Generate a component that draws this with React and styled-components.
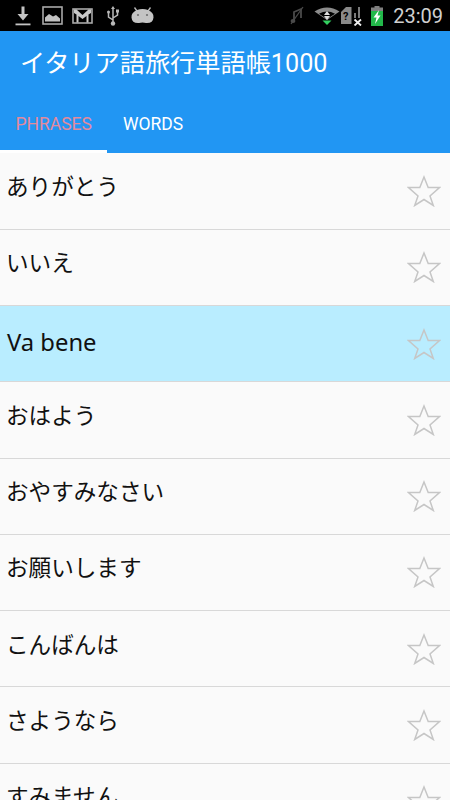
import React from 'react';
import styled, { createGlobalStyle } from 'styled-components';

const GlobalStyle = createGlobalStyle`
  html, body {
    margin: 0;
    padding: 0;
    height: 800px;
    overflow: hidden;
    background: #fafafa;
  }
`;

const Screen = styled.div`
  width: 450px;
  height: 800px;
  overflow: hidden;
  font-family: Roboto, "Noto Sans CJK JP", sans-serif;
`;

const StatusBar = styled.div`
  height: 31px;
  background: #000;
  display: flex;
  align-items: center;
  justify-content: space-between;
`;

const StatusGroup = styled.div`
  display: flex;
  align-items: center;
  padding: ${(p) => (p.$right ? '0 7px 0 0' : '0 0 0 15px')};
`;

const Glyph = styled.svg`
  display: block;
  flex: none;
  margin-left: ${(p) => p.$left || 0}px;
`;

const Clock = styled.span`
  font-size: 20px;
  color: #d0d0d0;
  margin-left: 10px;
`;

const AppBar = styled.header`
  height: 122px;
  background: #2196f3;
  display: flex;
  flex-direction: column;
`;

const Title = styled.h1`
  margin: 0;
  height: 60px;
  display: flex;
  align-items: center;
  padding-left: 20px;
  font-size: 25.2px;
  font-weight: 400;
  color: #fff;
`;

const Tabs = styled.nav`
  margin-top: auto;
  display: flex;
`;

const Tab = styled.div`
  height: 57px;
  box-sizing: border-box;
  display: flex;
  align-items: center;
  padding: 2px 15.5px 0;
  font-size: 17.5px;
  color: ${(p) => (p.$active ? '#e48a9c' : '#fff')};
  border-bottom: 3px solid ${(p) => (p.$active ? '#fff' : 'transparent')};
`;

const List = styled.main`
  padding-top: 0.5px;
`;

const Row = styled.div`
  height: 76.25px;
  box-sizing: border-box;
  display: flex;
  align-items: center;
  justify-content: space-between;
  padding: 0 9px 0 ${(p) => (p.$selected ? '7px' : '6px')};
  background: ${(p) => (p.$selected ? '#b9edff' : '#fafafa')};
  border-bottom: 1px solid #d8d8d8;
`;

const RowText = styled.span`
  font-family: "Noto Sans", "Noto Sans CJK JP", sans-serif;
  font-size: ${(p) => (p.$latin ? '23.8px' : '22.6px')};
  line-height: 30px;
  color: #111;
  padding-bottom: ${(p) => (p.$latin ? '4px' : '8px')};
`;

const Star = () => (
  <Glyph width="34" height="32" viewBox="0 0 34 32" fill="none" stroke="#c6c6c6" strokeWidth="1.5">
    <path d="M17 2 L21.2 12.5 L32.5 12.5 L23 21 L26.3 30.5 L17 24.5 L7.7 30.5 L11 21 L1.5 12.5 L12.8 12.5 Z" />
  </Glyph>
);

const words = [
  'ありがとう',
  'いいえ',
  'Va bene',
  'おはよう',
  'おやすみなさい',
  'お願いします',
  'こんばんは',
  'さようなら',
  'すみません',
];

const App = () => (
  <Screen>
    <GlobalStyle />
    <StatusBar>
      <StatusGroup>
        <Glyph width="16" height="20" viewBox="0 0 16 20" fill="#c4c4c4">
          <path d="M6.5 0.5 H9.5 V8 H13.5 L8 14.5 L2.5 8 H6.5 Z" />
          <rect x="0.5" y="17.5" width="15" height="1.8" />
        </Glyph>
        <Glyph $left={11} width="21" height="19" viewBox="0 0 21 19">
          <rect x="1" y="1" width="19" height="17" fill="none" stroke="#a8a8a8" strokeWidth="1.6" />
          <path d="M3 15.5 V11.5 L7 8 L11 10.5 L14 9 L18 12.5 V15.5 Z" fill="#c0c0c0" />
        </Glyph>
        <Glyph $left={9} width="21" height="16" viewBox="0 0 21 16">
          <rect x="1" y="1" width="19" height="14" fill="none" stroke="#a8a8a8" strokeWidth="1.6" />
          <path d="M2 1.5 H4.5 L10.5 7 L16.5 1.5 H19 V5 L16.5 6.5 V14.5 H14.5 V8 L10.5 11 L6.5 8 V14.5 H4.5 V6.5 L2 5 Z" fill="#c8c8c8" />
        </Glyph>
        <Glyph $left={13} width="14" height="20" viewBox="0 0 14 20" fill="none" stroke="#b8b8b8" strokeWidth="1.5">
          <path d="M7 2 V17 M7 14 L2.5 11 V7 M7 12 L11.5 9 V6" />
          <path d="M7 0 L9 3 H5 Z" fill="#b8b8b8" stroke="none" />
          <circle cx="7" cy="17.5" r="2.2" fill="#b8b8b8" stroke="none" />
          <circle cx="2.5" cy="6" r="1.5" fill="#b8b8b8" stroke="none" />
          <rect x="10" y="3.5" width="3" height="3" fill="#b8b8b8" stroke="none" />
        </Glyph>
        <Glyph $left={11} width="23" height="18" viewBox="0 0 23 18">
          <path d="M6 4 L3.5 0.5 M17 4 L19.5 0.5" stroke="#b8b8b8" strokeWidth="1.3" />
          <path d="M6 3 Q11.5 1 17 3 Q23 5.5 22.5 10.5 Q22 16.5 15 16 Q11.5 15 8 16 Q1 16.5 0.5 10.5 Q0 5.5 6 3 Z" fill="#c4c4c4" />
          <circle cx="7" cy="8" r="1.1" fill="#707070" />
          <circle cx="16" cy="8" r="1.1" fill="#707070" />
        </Glyph>
      </StatusGroup>
      <StatusGroup $right>
        <Glyph width="16" height="19" viewBox="0 0 16 19" fill="none">
          <path d="M5 15 V6 L12 3 V12" stroke="#4a4a4a" strokeWidth="1.8" />
          <path d="M2 18 L14 1" stroke="#4a4a4a" strokeWidth="1.3" />
          <ellipse cx="4" cy="15" rx="2.4" ry="2" fill="#4a4a4a" />
        </Glyph>
        <Glyph $left={9} width="26" height="18" viewBox="0 0 26 18">
          <path d="M13 13 L0.5 4.5 Q13 -3.5 25.5 4.5 Z" fill="#8c8c8c" />
          <path d="M13 12 L5 6.8 Q13 2 21 6.8 Z" fill="#000" />
          <path d="M13 4 L16 8 H10 Z" fill="#e0e0e0" />
          <path d="M10 9 H16 L13 13 Z" fill="#e0e0e0" />
          <path d="M8.5 13.5 H17.5 L13 18 Z" fill="#33d060" />
        </Glyph>
        <Glyph $left={1} width="21" height="20" viewBox="0 0 21 20">
          <path d="M0 6 L5 1 H10.5 V18 H0 Z" fill="#8a8a8a" />
          <text x="2" y="14" fontSize="11" fontWeight="700" fontFamily="Roboto" fill="#000">?</text>
          <rect x="13" y="7" width="2" height="5" fill="#7a7a7a" />
          <rect x="17" y="1" width="2" height="11" fill="#7a7a7a" />
          <path d="M13.5 13.5 L20 19.5 M20 13.5 L13.5 19.5" stroke="#eee" strokeWidth="1.8" />
        </Glyph>
        <Glyph $left={9} width="12" height="20" viewBox="0 0 12 20">
          <rect x="3.5" y="0" width="5" height="2" fill="#808080" />
          <rect x="0" y="1.5" width="12" height="18.5" fill="#808080" />
          <rect x="0" y="5" width="12" height="15" fill="#22b84a" />
          <path d="M8 4 L2.5 11.5 H5.5 L4 18 L9.5 9.5 H6.5 Z" fill="#fff" />
        </Glyph>
        <Clock>23:09</Clock>
      </StatusGroup>
    </StatusBar>
    <AppBar>
      <Title>イタリア語旅行単語帳1000</Title>
      <Tabs>
        <Tab $active>PHRASES</Tab>
        <Tab>WORDS</Tab>
      </Tabs>
    </AppBar>
    <List>
      {words.map((word) => (
        <Row key={word} $selected={word === 'Va bene'}>
          <RowText $latin={word === 'Va bene'}>{word}</RowText>
          <Star />
        </Row>
      ))}
    </List>
  </Screen>
);

export default App;
